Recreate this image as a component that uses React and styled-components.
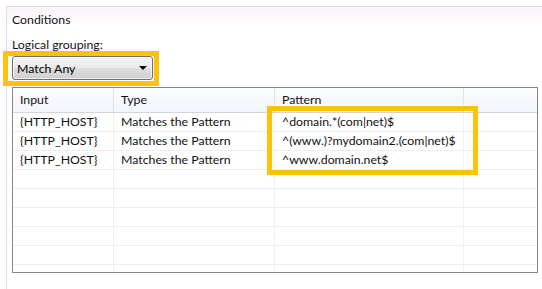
import React from "react";
import styled, { createGlobalStyle } from "styled-components";

const GlobalStyle = createGlobalStyle`
  html, body {
    margin: 0;
    padding: 0;
    background: #fff;
  }
  body {
    width: 542px;
    height: 289px;
    overflow: hidden;
    font-family: Lato, "Noto Sans", sans-serif;
    font-size: 12.3px;
    color: #111;
  }
`;

const HIGHLIGHT = "#fcc30d";

const rows = [
  ["{HTTP_HOST}", "Matches the Pattern", "^domain.*(com|net)$"],
  ["{HTTP_HOST}", "Matches the Pattern", "^(www.)?mydomain2.(com|net)$"],
  ["{HTTP_HOST}", "Matches the Pattern", "^www.domain.net$"],
  ["", "", ""],
  ["", "", ""],
  ["", "", ""],
  ["", "", ""],
  ["", "", ""],
  ["", "", ""],
];

export default function App() {
  return (
    <>
      <GlobalStyle />
      <Page>
        <Panel>
          <PanelTitle>Conditions</PanelTitle>
          <PanelBody>
            <Label>Logical grouping:</Label>
            <Highlighted>
              <Combo>
                <span>Match Any</span>
                <Arrow />
              </Combo>
            </Highlighted>
            <Grid>
              <HeaderRow>
                <HeadCell>Input</HeadCell>
                <HeadCell>Type</HeadCell>
                <HeadCell>Pattern</HeadCell>
                <HeadCell $last />
              </HeaderRow>
              {rows.map((r, i) => (
                <Row key={i}>
                  <Cell>{r[0]}</Cell>
                  <Cell>{r[1]}</Cell>
                  <Cell>{r[2]}</Cell>
                  <Cell $last />
                </Row>
              ))}
              <PatternFrame />
            </Grid>
          </PanelBody>
        </Panel>
      </Page>
    </>
  );
}

const Page = styled.div`
  box-sizing: border-box;
  height: 289px;
  padding: 6px 0 0 6px;
`;

const Panel = styled.div`
  height: 100%;
  border-top: 1px solid #d6dfe6;
  border-left: 1px solid #d6dfe6;
`;

const PanelTitle = styled.div`
  height: 14px;
  padding: 6px 0 0 5px;
  line-height: 14px;
  background: linear-gradient(#fbf3f8, #fdfafc 60%, #fff);
`;

const PanelBody = styled.div`
  padding-left: 5px;
`;

const Label = styled.div`
  margin-top: 11px;
  line-height: 13px;
`;

const Highlighted = styled.div`
  position: relative;
  display: flex;
  width: fit-content;
  margin-top: 5px;

  &::after {
    content: "";
    position: absolute;
    left: -9px;
    right: -6px;
    top: -5px;
    bottom: -6px;
    border: 5px solid ${HIGHLIGHT};
  }
`;

const Combo = styled.div`
  box-sizing: border-box;
  width: 141px;
  height: 24px;
  display: flex;
  align-items: center;
  justify-content: space-between;
  padding: 0 4px 0 4px;
  border: 1px solid #707070;
  border-radius: 3px;
  background: linear-gradient(#f2f2f2, #ebebeb 48%, #dddddd 52%, #cfcfcf);
  box-shadow: inset 0 0 0 1px rgba(255, 255, 255, 0.7);
  color: #000;
`;

const Arrow = styled.span`
  width: 0;
  height: 0;
  border-left: 4px solid transparent;
  border-right: 4px solid transparent;
  border-top: 4px solid #000;
  margin-right: 1px;
`;

const Grid = styled.div`
  position: relative;
  box-sizing: border-box;
  width: 526px;
  height: 186px;
  margin-top: 7px;
  border: 1px solid #828790;
  overflow: hidden;
  background: #fff;
`;

const columns = "101px 161px 189px 1fr";

const HeaderRow = styled.div`
  display: grid;
  grid-template-columns: ${columns};
  height: 24px;
  border-bottom: 1px solid #d5d5d5;
  background: linear-gradient(#fbfcfe, #f3f5fc);
`;

const HeadCell = styled.div`
  padding-left: 7px;
  line-height: 24px;
  border-right: ${(p) => (p.$last ? "none" : "1px solid #e3e3e6")};
`;

const Row = styled.div`
  display: grid;
  grid-template-columns: ${columns};
  height: 18px;
  border-bottom: 1px solid #efeff1;
`;

const Cell = styled.div`
  padding-left: 7px;
  line-height: 18px;
  white-space: nowrap;
  border-right: ${(p) => (p.$last ? "none" : "1px solid #f0eff2")};
`;

const PatternFrame = styled.div`
  position: absolute;
  left: 254px;
  top: 18px;
  width: 211px;
  height: 69px;
  box-sizing: border-box;
  border: 5px solid ${HIGHLIGHT};
`;
